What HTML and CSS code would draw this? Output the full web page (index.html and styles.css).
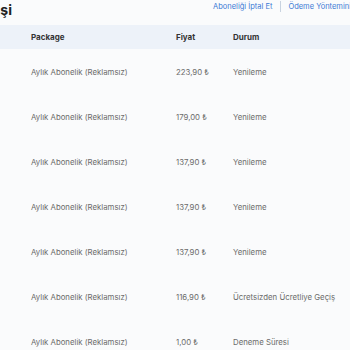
FILE: index.html
```html
<!DOCTYPE html>
<html lang="tr">
<head>
<meta charset="utf-8">
<link rel="stylesheet" href="styles.css">
</head>
<body>
<div class="page">
  <div class="top">
    <div class="title-clip"><h1 class="title">Abonelik Geçmişi</h1></div>
    <div class="links">
      <a class="link">Aboneliği İptal Et</a>
      <span class="sep"></span>
      <a class="link">Ödeme Yöntemini Değiştir</a>
    </div>
  </div>
  <div class="table">
    <div class="row head">
      <div>Package</div><div>Fiyat</div><div>Durum</div>
    </div>
    <div class="row"><div>Aylık Abonelik (Reklamsız)</div><div>223,90 ₺</div><div>Yenileme</div></div>
    <div class="row"><div>Aylık Abonelik (Reklamsız)</div><div>179,00 ₺</div><div>Yenileme</div></div>
    <div class="row"><div>Aylık Abonelik (Reklamsız)</div><div>137,90 ₺</div><div>Yenileme</div></div>
    <div class="row"><div>Aylık Abonelik (Reklamsız)</div><div>137,90 ₺</div><div>Yenileme</div></div>
    <div class="row"><div>Aylık Abonelik (Reklamsız)</div><div>137,90 ₺</div><div>Yenileme</div></div>
    <div class="row"><div>Aylık Abonelik (Reklamsız)</div><div>116,90 ₺</div><div>Ücretsizden Ücretliye Geçiş</div></div>
    <div class="row"><div>Aylık Abonelik (Reklamsız)</div><div>1,00 ₺</div><div>Deneme Süresi</div></div>
  </div>
</div>
</body>
</html>
```
FILE: styles.css
```css
html, body {
  margin: 0;
  padding: 0;
  background: #fafbfc;
  overflow: hidden;
  width: 350px;
  height: 350px;
}
.page {
  font-family: Inter, "Noto Sans", sans-serif;
  color: #6b6b6b;
  width: 350px;
}
.top {
  height: 25px;
  display: flex;
  align-items: flex-start;
}
.title-clip {
  width: 14px;
  overflow: hidden;
  display: flex;
  justify-content: flex-end;
  flex-shrink: 0;
}
.title {
  margin: 2px 2px 0 0;
  font-size: 14px;
  line-height: 16px;
  font-weight: 700;
  color: #222;
  white-space: nowrap;
}
.links {
  margin-left: 199px;
  display: flex;
  align-items: center;
  white-space: nowrap;
  height: 12px;
}
.link {
  color: #3a7ad5;
  font-size: 7.5px;
}
.sep {
  width: 1px;
  height: 11px;
  background: #c9d3e0;
  margin: 0 7px 0 8px;
}
.row {
  display: grid;
  grid-template-columns: 145px 57px 1fr;
  padding-left: 31px;
  height: 45px;
  align-items: center;
  font-size: 7.8px;
  white-space: nowrap;
}
.row.head {
  height: 24px;
  background: #edf2f9;
  color: #333;
  font-weight: 700;
  font-size: 8px;
}
```
